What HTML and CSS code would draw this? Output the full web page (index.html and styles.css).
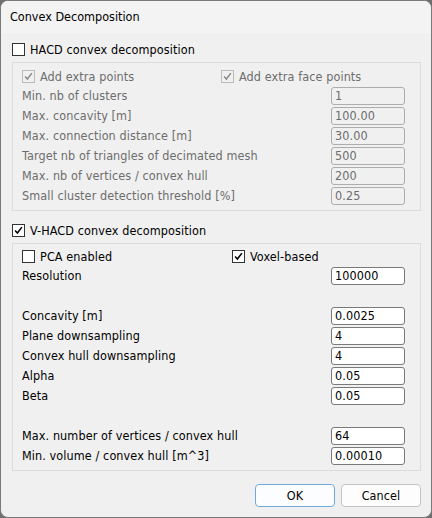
FILE: index.html
```html
<!DOCTYPE html>
<html>
<head>
<meta charset="utf-8">
<link rel="stylesheet" href="styles.css">
</head>
<body>
<div class="window">
  <div class="titlebar">Convex Decomposition</div>
  <div class="content">
    <div class="head">
      <span class="cb"></span><span>HACD convex decomposition</span>
    </div>
    <div class="group g1 disabled">
      <div class="checkrow">
        <div class="citem w1">
          <span class="cb checked"><svg viewBox="0 0 13 13"><polyline points="2.5,6.5 5.2,9.5 10.5,2.5" /></svg></span>
          <span>Add extra points</span>
        </div>
        <div class="citem">
          <span class="cb checked"><svg viewBox="0 0 13 13"><polyline points="2.5,6.5 5.2,9.5 10.5,2.5" /></svg></span>
          <span>Add extra face points</span>
        </div>
      </div>
      <div class="row"><span>Min. nb of clusters</span><span class="field">1</span></div>
      <div class="row"><span>Max. concavity [m]</span><span class="field">100.00</span></div>
      <div class="row"><span>Max. connection distance [m]</span><span class="field">30.00</span></div>
      <div class="row"><span>Target nb of triangles of decimated mesh</span><span class="field">500</span></div>
      <div class="row"><span>Max. nb of vertices / convex hull</span><span class="field">200</span></div>
      <div class="row"><span>Small cluster detection threshold [%]</span><span class="field">0.25</span></div>
    </div>
    <div class="head head2">
      <span class="cb checked"><svg viewBox="0 0 13 13"><polyline points="2.5,6.5 5.2,9.5 10.5,2.5" /></svg></span><span>V-HACD convex decomposition</span>
    </div>
    <div class="group g2">
      <div class="checkrow">
        <div class="citem w2">
          <span class="cb"></span>
          <span>PCA enabled</span>
        </div>
        <div class="citem">
          <span class="cb checked"><svg viewBox="0 0 13 13"><polyline points="2.5,6.5 5.2,9.5 10.5,2.5" /></svg></span>
          <span>Voxel-based</span>
        </div>
      </div>
      <div class="row"><span>Resolution</span><span class="field">100000</span></div>
      <div class="row"></div>
      <div class="row"><span>Concavity [m]</span><span class="field">0.0025</span></div>
      <div class="row"><span>Plane downsampling</span><span class="field">4</span></div>
      <div class="row"><span>Convex hull downsampling</span><span class="field">4</span></div>
      <div class="row"><span>Alpha</span><span class="field">0.05</span></div>
      <div class="row"><span>Beta</span><span class="field">0.05</span></div>
      <div class="row"></div>
      <div class="row"><span>Max. number of vertices / convex hull</span><span class="field">64</span></div>
      <div class="row"><span>Min. volume / convex hull [m^3]</span><span class="field">0.00010</span></div>
    </div>
    <div class="buttons">
      <span class="btn default">OK</span>
      <span class="btn">Cancel</span>
    </div>
  </div>
</div>
</body>
</html>
```
FILE: styles.css
```css
html, body {
  margin: 0;
  padding: 0;
  background: #6e6e6e;
}
body {
  width: 432px;
  height: 518px;
  font-family: "DejaVu Sans Condensed", "DejaVu Sans", Tahoma, sans-serif;
  font-size: 12.5px;
  letter-spacing: 0.1px;
  color: #000;
}
.window {
  box-sizing: border-box;
  width: 432px;
  height: 518px;
  border: 1px solid #7a7a7a;
  border-radius: 8px;
  background: #f0f0f0;
  overflow: hidden;
}
.titlebar {
  height: 32px;
  line-height: 31px;
  padding-left: 9px;
  background: #f3f3f3;
  letter-spacing: 0;
}
.content {
  padding: 5px 10px 0 11px;
}
.head {
  display: flex;
  align-items: center;
  height: 22px;
  gap: 5px;
}
.head2 {
  margin-top: 8px;
}
.head + .group {
  margin-top: 2px;
}
.cb {
  box-sizing: border-box;
  width: 13px;
  height: 13px;
  border: 1px solid #333;
  background: #fff;
  display: inline-flex;
  flex: none;
}
.cb svg {
  width: 11px;
  height: 11px;
}
.cb polyline {
  fill: none;
  stroke: #000;
  stroke-width: 1.8;
}
.group {
  border: 1px solid #dcdcdc;
  padding: 3px 15px 4px 9px;
}
.g2 {
  padding-top: 2px;
}
.checkrow {
  display: flex;
  align-items: center;
  height: 20px;
}
.citem {
  display: flex;
  align-items: center;
  gap: 5px;
}
.w1 { width: 199px; }
.w2 { width: 210px; }
.row {
  display: flex;
  align-items: center;
  justify-content: space-between;
  height: 20px;
}
.row > span:first-child {
  margin-top: -1px;
}
.field {
  box-sizing: border-box;
  width: 74px;
  height: 18px;
  line-height: 16px;
  border: 1px solid #7a7a7a;
  border-radius: 3px;
  background: #fff;
  padding-left: 3px;
}
.disabled {
  color: #6d6d6d;
}
.disabled .field {
  background: #f0f0f0;
  border-color: #adadad;
}
.disabled .cb {
  border-color: #bcbcbc;
  background: #f0f0f0;
}
.disabled .cb polyline {
  stroke: #8a8a8a;
}
.buttons {
  display: flex;
  justify-content: flex-end;
  gap: 6px;
  margin-top: 13px;
}
.btn {
  box-sizing: border-box;
  width: 80px;
  height: 23px;
  line-height: 21px;
  text-align: center;
  border: 1px solid #c4c4c4;
  border-radius: 4px;
  background: #fdfdfd;
}
.btn.default {
  border-color: #72a9dc;
  background: #fcfdfe;
}
```
